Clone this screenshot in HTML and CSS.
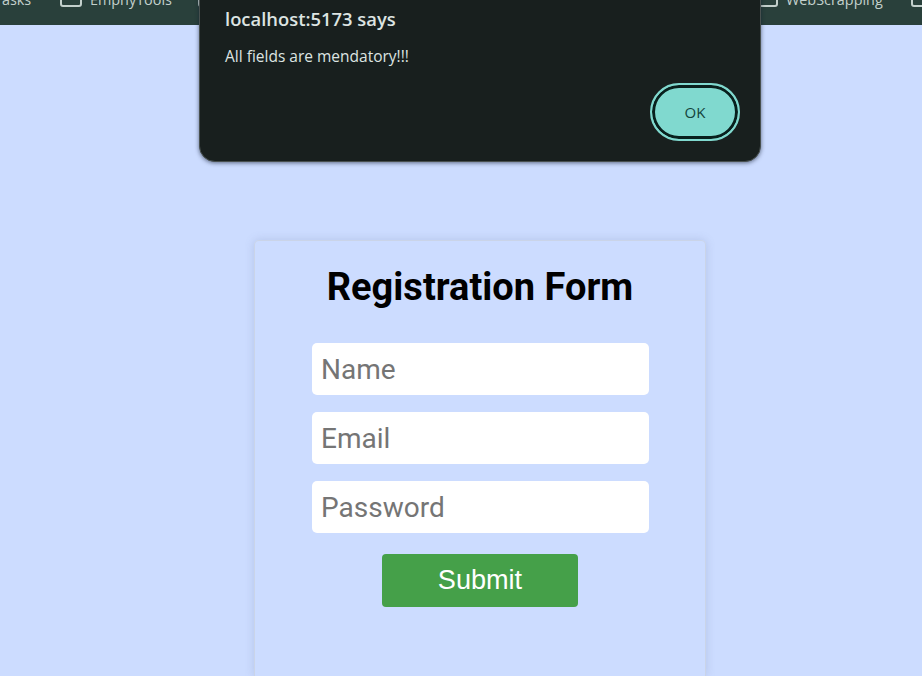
FILE: index.html
```html
<!DOCTYPE html>
<html lang="en">
<head>
<meta charset="utf-8">
<title>Registration Form</title>
<link rel="stylesheet" href="styles.css">
</head>
<body>
<nav class="bookmarks">
  <span class="bookmark first"><span class="label">Tasks</span></span>
  <span class="bookmark second"><svg class="folder" viewBox="0 0 22 18"><path d="M1 3Q1 1 3 1H8L11 4H19Q21 4 21 6V15Q21 17 19 17H3Q1 17 1 15Z"/></svg><span class="label">EmphyTools</span></span>
  <span class="bookmark third"><svg class="folder" viewBox="0 0 22 18"><path d="M1 3Q1 1 3 1H8L11 4H19Q21 4 21 6V15Q21 17 19 17H3Q1 17 1 15Z"/></svg></span>
  <span class="bookmark fourth"><svg class="folder" viewBox="0 0 22 18"><path d="M1 3Q1 1 3 1H8L11 4H19Q21 4 21 6V15Q21 17 19 17H3Q1 17 1 15Z"/></svg><span class="label">WebScrapping</span></span>
  <span class="bookmark"><svg class="folder" viewBox="0 0 22 18"><path d="M1 3Q1 1 3 1H8L11 4H19Q21 4 21 6V15Q21 17 19 17H3Q1 17 1 15Z"/></svg></span>
</nav>
<main class="page">
  <form class="card">
    <h1 class="title">Registration Form</h1>
    <input class="field" type="text" placeholder="Name">
    <input class="field" type="email" placeholder="Email">
    <input class="field" type="password" placeholder="Password">
    <button class="submit" type="button">Submit</button>
  </form>
</main>
<div class="dialog" role="alertdialog">
  <div class="origin"><span>localhost:5173 says</span></div>
  <div class="message"><span>All fields are mendatory!!!</span></div>
  <button class="ok" type="button">OK</button>
</div>
</body>
</html>
```

FILE: styles.css
```css
* { box-sizing: border-box; }
html, body { margin: 0; height: 100%; overflow: hidden; }
body { display: flex; flex-direction: column; background: #ccdcff; font-family: Roboto, sans-serif; }

.bookmarks {
  display: flex;
  flex: none;
  height: 25px;
  overflow: hidden;
  background: #29403b;
  color: #c3d0cc;
  font: 14.4px/20px "Open Sans", sans-serif;
}
.bookmark { display: flex; flex: none; height: 20px; margin-top: -10px; white-space: nowrap; }
.first { width: 66px; margin-left: -6px; }
.second { width: 138px; }
.third { width: 558px; }
.fourth { width: 155px; }
.folder { width: 22px; height: 18px; flex: none; margin: -1px 8px 0 0; fill: none; stroke: #c3d0cc; stroke-width: 2; }
.label { display: block; flex: none; }

.page { display: flex; flex: 1; min-height: 0; overflow: hidden; padding: 215px 0 0 254px; }
.card {
  display: flex;
  flex-direction: column;
  align-items: center;
  flex: none;
  width: 452px;
  padding-top: 23px;
  border-radius: 5px 5px 0 0;
  border: 1px solid #cad4e8;
  border-bottom: 0;
  box-shadow: 0 0 10px rgba(90, 110, 150, .22);
}
.title { margin: 0 0 33px; font-size: 38px; line-height: 46px; font-weight: 700; white-space: nowrap; }
.field {
  flex: none;
  width: 337px;
  height: 52px;
  margin: 0 0 17px 1px;
  padding: 1px 9px 0;
  border: 0;
  border-radius: 5px;
  background: #fff;
  font: 28px Roboto, sans-serif;
}
.field::placeholder { color: #757575; opacity: 1; }
.submit {
  flex: none;
  width: 196px;
  height: 53px;
  margin-top: 4px;
  padding: 0 0 1px;
  border: 0;
  border-radius: 4px;
  background: #45a049;
  color: #fff;
  font: 27.1px "Liberation Sans", sans-serif;
}

.dialog {
  position: absolute;
  top: -20px;
  left: 199px;
  display: flex;
  flex-direction: column;
  width: 562px;
  height: 182px;
  padding: 25px 20px 0 25px;
  border: 1px solid #48504f;
  border-radius: 0 0 16px 16px;
  background: #181f1e;
  box-shadow: 0 1px 4px rgba(20, 30, 50, .6);
  color: #dde4e2;
  font-family: "Open Sans", sans-serif;
  white-space: nowrap;
}
.origin { height: 26px; font-size: 18.4px; line-height: 26px; font-weight: 600; }
.message { height: 22px; margin-top: 13px; font-size: 15.5px; line-height: 22px; }
.ok {
  align-self: flex-end;
  width: 90px;
  height: 58px;
  margin-top: 16px;
  padding: 0;
  border: 2px solid #80d9cf;
  border-radius: 29px;
  background: #80d9cf;
  box-shadow: inset 0 0 0 3px #08201d;
  color: #14443c;
  font: 500 15px "Open Sans", sans-serif;
}
```
